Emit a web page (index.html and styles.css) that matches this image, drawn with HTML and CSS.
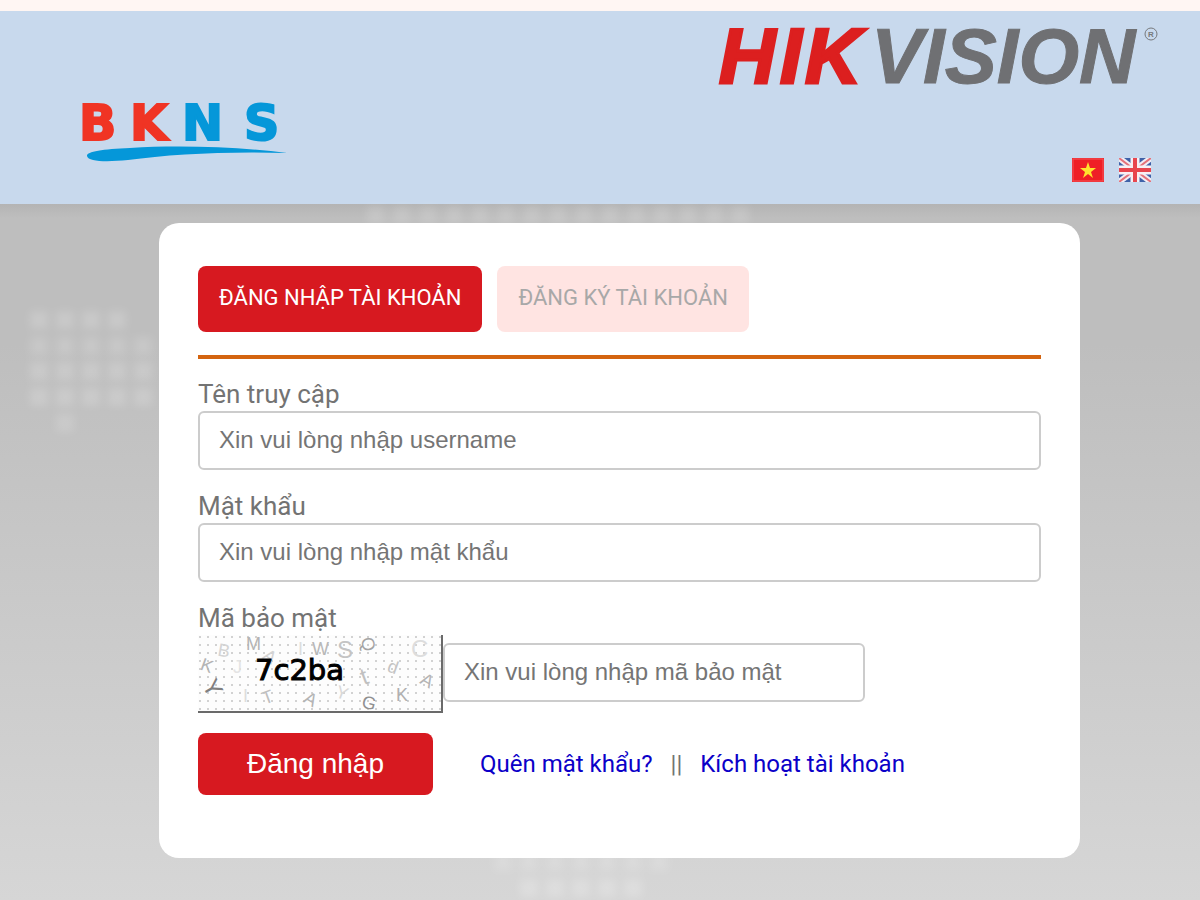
FILE: index.html
```
<!DOCTYPE html>
<html lang="vi">
<head>
    <meta charset="UTF-8">
    <title>Đăng nhập tài khoản</title>
    <link rel="stylesheet" href="styles.css">
</head>
<body>
<header class="header">
    <svg class="logo-bkns" viewBox="0 0 210 60" role="img" aria-label="BKNS">
        <g class="bkns-text">
            <text class="bkns-red" x="-1 50" y="38">BK</text>
            <text class="bkns-blue" x="102 164" y="38">NS</text>
        </g>
        <path fill="#0597d9" d="M207 51C160 45 100 43 50 46C22 47 6 50 7 54C8 60 28 60 48 58C90 52 150 49 207 51Z"/>
    </svg>
    <div class="header-right">
        <svg class="logo-hik" viewBox="0 0 442 60" role="img" aria-label="HIKVISION">
            <text class="hik-text hik-red" x="1 62 87" y="58">HIK</text>
            <text class="hik-text hik-gray" x="153" y="58">VISION</text>
            <circle cx="433" cy="9" r="6" fill="none" stroke="#77797c"/>
            <text class="hik-mark" x="433" y="12">R</text>
        </svg>
        <nav class="languages">
            <a href="#" aria-label="Tiếng Việt">
                <svg viewBox="0 0 32 24">
                    <rect width="32" height="24" fill="#ef1f26"/>
                    <rect x="1" y="1" width="30" height="22" fill="none" stroke="#f4565a"/>
                    <path fill="#ffe32e" d="M16 4L18 10L24 10L19 14L21 20L16 16L11 20L13 14L8 10L14 10Z"/>
                </svg>
            </a>
            <a href="#" aria-label="English">
                <svg viewBox="0 0 32 24">
                    <rect width="32" height="24" fill="#3f62a8"/>
                    <path stroke="#f3eef4" stroke-width="6" d="M0 0L32 24M32 0L0 24"/>
                    <path stroke="#e4727a" stroke-width="2" d="M0 0L32 24M32 0L0 24"/>
                    <path stroke="#f7f0f4" stroke-width="9" d="M16 0V24M0 12H32"/>
                    <path stroke="#e8464e" stroke-width="4" d="M16 0V24M0 12H32"/>
                </svg>
            </a>
        </nav>
    </div>
</header>
<main class="content">
    <svg class="map" id="map" aria-hidden="true"></svg>
    <form class="card">
        <div class="tabs">
            <button type="button" class="tab active">ĐĂNG NHẬP TÀI KHOẢN</button>
            <button type="button" class="tab">ĐĂNG KÝ TÀI KHOẢN</button>
        </div>
        <div class="field">
            <label for="username">Tên truy cập</label>
            <input type="text" id="username" placeholder="Xin vui lòng nhập username">
        </div>
        <div class="field">
            <label for="password">Mật khẩu</label>
            <input type="password" id="password" placeholder="Xin vui lòng nhập mật khẩu">
        </div>
        <div class="field">
            <label for="code">Mã bảo mật</label>
            <div class="captcha-row">
                <svg class="captcha" viewBox="0 0 245 78" role="img" aria-label="7c2ba">
                    <defs>
                        <pattern id="dots" width="8" height="8" patternUnits="userSpaceOnUse">
                            <rect x="1" y="1" width="2" height="2" fill="#d2d2d2"/>
                        </pattern>
                    </defs>
                    <rect width="245" height="78" fill="#fdfdfd"/>
                    <rect width="245" height="78" fill="url(#dots)"/>
                    <g class="noise">
                        <text x="20" y="22" fill="#d4d4d4" transform="rotate(10 28 15)">B</text>
                        <text x="48" y="15" fill="#b4b4b4">M</text>
                        <text x="100" y="20" fill="#ddd">I</text>
                        <text x="114" y="20" fill="#b8b8b8">W</text>
                        <text x="139" y="23" class="noise-big" fill="#c4c4c4">S</text>
                        <text x="164" y="16" fill="#a4a4a4" transform="rotate(75 171 9)">Q</text>
                        <text x="213" y="22" class="noise-big" fill="#ddd">C</text>
                        <text x="3" y="37" fill="#b4b4b4" transform="rotate(20 10 31)">K</text>
                        <text x="35" y="38" fill="#e4e4e4">J</text>
                        <text x="66" y="27" fill="#d4d4d4" transform="rotate(35 71 21)">A</text>
                        <text x="190" y="38" fill="#c4c4c4" transform="rotate(20 195 32)">d</text>
                        <text x="163" y="49" class="noise-big" fill="#c0c0c0" transform="rotate(-20 168 42)">t</text>
                        <text x="223" y="52" fill="#b4b4b4" transform="rotate(30 230 46)">A</text>
                        <text x="7" y="60" class="noise-big" fill="#808080" transform="rotate(60 14 52)">Y</text>
                        <text x="45" y="67" fill="#ddd">I</text>
                        <text x="64" y="68" fill="#c0c0c0" transform="rotate(-20 70 62)">T</text>
                        <text x="107" y="71" fill="#b4b4b4" transform="rotate(30 114 64)">A</text>
                        <text x="138" y="64" fill="#d8d8d8" transform="rotate(20 144 58)">Y</text>
                        <text x="164" y="74" fill="#909090" transform="rotate(15 171 68)">G</text>
                        <text x="198" y="66" fill="#b0b0b0">K</text>
                    </g>
                    <text class="captcha-code" x="57" y="45">7c2ba</text>
                    <path fill="none" stroke="#6a6a6a" stroke-width="2" d="M244 0V77H0"/>
                </svg>
                <input type="text" id="code" placeholder="Xin vui lòng nhập mã bảo mật">
            </div>
        </div>
        <div class="actions">
            <button type="submit" class="submit">Đăng nhập</button>
            <div class="links">
                <a href="#">Quên mật khẩu?</a>
                <span>||</span>
                <a href="#">Kích hoạt tài khoản</a>
            </div>
        </div>
    </form>
</main>
<script src="map.js"></script>
</body>
</html>
```
FILE: styles.css
```
* {
    box-sizing: border-box;
}

body {
    display: flex;
    flex-direction: column;
    min-height: 100vh;
    margin: 0;
    font-family: Roboto, sans-serif;
    font-size: 26px;
    color: #737373;
}

button,
input {
    font-family: inherit;
    border: 0;
}

/* header */
.header {
    display: flex;
    justify-content: space-between;
    height: 204px;
    padding: 14px 40px 0 80px;
    border-top: 11px solid #fff6f3;
    background: #c8d9ed;
}

.logo-bkns {
    width: 210px;
    height: 60px;
    margin-top: 77px;
    overflow: visible;
}

.bkns-text {
    font: bold 49px "DejaVu Sans", sans-serif;
    stroke-width: 2;
}

.bkns-red {
    fill: #f03424;
    stroke: #f03424;
}

.bkns-blue {
    fill: #0597d9;
    stroke: #0597d9;
}

.header-right {
    display: flex;
    flex-direction: column;
    align-items: flex-end;
    gap: 73px;
}

.logo-hik {
    width: 442px;
    height: 60px;
    overflow: visible;
}

.hik-text {
    font: italic bold 78px "Liberation Sans", sans-serif;
}

.hik-red {
    fill: #dc1f1f;
    stroke: #dc1f1f;
    stroke-width: 3;
}

.hik-gray {
    fill: #6f7073;
    stroke: #6f7073;
}

.hik-mark {
    font: bold 8px "Liberation Sans", sans-serif;
    text-anchor: middle;
    fill: #77797c;
}

.languages {
    display: flex;
    gap: 15px;
    padding-right: 9px;
}

.languages svg {
    display: block;
    width: 32px;
    height: 24px;
}

/* content */
.content {
    position: relative;
    flex: 1;
    padding: 19px 120px 41px 159px;
    background: linear-gradient(#b4b4b4, #bebebe 14px, #bebebe 20%, #d6d6d6);
}

.map {
    position: absolute;
    top: 0;
    left: 0;
    width: 100%;
    height: 100%;
    fill: #fff;
    filter: blur(4px);
}

.card {
    position: relative;
    padding: 43px 39px 63px;
    border-radius: 20px;
    background: #fff;
}

.tabs {
    display: flex;
    gap: 15px;
    padding-bottom: 23px;
    margin-bottom: 19px;
    border-bottom: 4px solid #d4640f;
}

.tab {
    height: 66px;
    padding: 0 21px 4px;
    border-radius: 8px;
    font-size: 22px;
    color: #a8a8a8;
    background: #ffe4e2;
}

.tab.active {
    color: #fff;
    background: #d71920;
}

.field {
    margin-bottom: 20px;
}

.field label {
    display: block;
    line-height: 33px;
}

.field input {
    display: block;
    width: 100%;
    height: 59px;
    padding: 0 19px 2px;
    border: 2px solid #ccc;
    border-radius: 6px;
    font-family: "Liberation Sans", sans-serif;
    font-size: 24px;
}

.field input::placeholder {
    color: #757575;
}

.captcha-row {
    display: flex;
    align-items: flex-start;
}

.captcha {
    flex: none;
    width: 245px;
    height: 78px;
}

.noise {
    font: 18px "Liberation Sans", sans-serif;
}

.noise-big {
    font-size: 24px;
}

.captcha-code {
    font: 29px "DejaVu Sans", sans-serif;
    stroke: #000;
}

.captcha-row input {
    width: 50%;
    margin-top: 8px;
}

.actions {
    display: flex;
    align-items: center;
    gap: 47px;
}

.submit {
    width: 235px;
    height: 62px;
    border-radius: 8px;
    font-family: "Liberation Sans", sans-serif;
    font-size: 28px;
    color: #fff;
    background: #d71920;
}

.links {
    display: flex;
    gap: 18px;
    font-size: 24px;
}

.links a {
    color: #0b00c8;
    text-decoration: none;
}
```
FILE: map.js
```
(function () {
    // [first x, y, number of dots, opacity]
    const rows = [
        [376, 11, 15, 0.14],
        [39, 116, 4, 0.17],
        [39, 142, 5, 0.15],
        [39, 167, 5, 0.17],
        [39, 193, 5, 0.17],
        [65, 219, 1, 0.15],
        [503, 658, 7, 0.15],
        [529, 684, 5, 0.2]
    ];
    const map = document.querySelector('#map');

    rows.forEach(([x, y, count, opacity]) => {
        for (let i = 0; i < count; i++) {
            let dot = document.createElementNS('http://www.w3.org/2000/svg', 'rect');
            dot.setAttribute('x', x + i * 26 - 9);
            dot.setAttribute('y', y - 9);
            dot.setAttribute('width', 18);
            dot.setAttribute('height', 18);
            dot.setAttribute('opacity', opacity);
            map.appendChild(dot);
        }
    });
})()
```
